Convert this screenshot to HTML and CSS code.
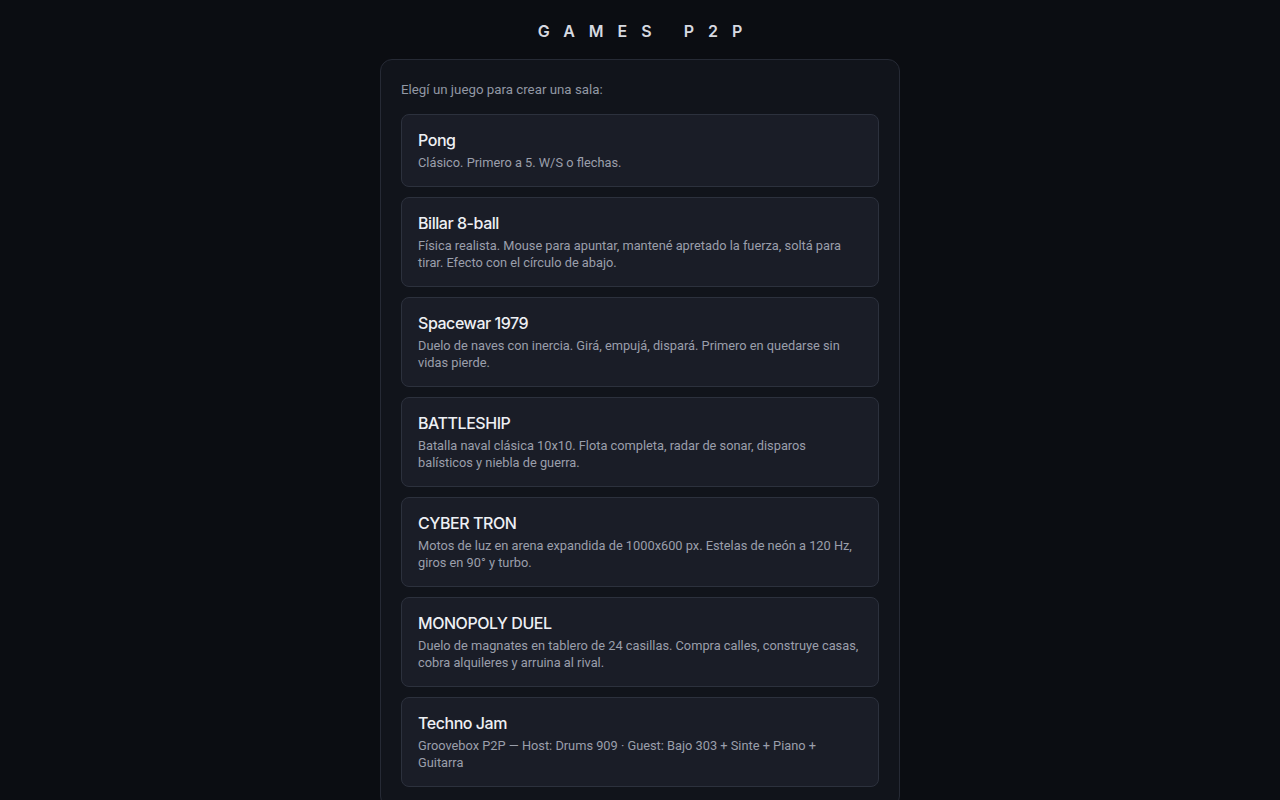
FILE: index.html
```html
<!DOCTYPE html>
<html lang="es">
<head>
    <meta charset="UTF-8">
    <meta name="viewport" content="width=device-width, initial-scale=1.0">
    <title>Games P2P</title>
    <link rel="stylesheet" href="styles.css">
</head>
<body>

<h1 class="brand">GAMES P2P</h1>

<div class="panel">
    <p class="hint">Elegí un juego para crear una sala:</p>

    <ul class="game-list">
        <li class="game">
            <div class="game-title">Pong</div>
            <div class="game-desc">Clásico. Primero a 5. W/S o flechas.</div>
        </li>
        <li class="game">
            <div class="game-title">Billar 8-ball</div>
            <div class="game-desc">Física realista. Mouse para apuntar, mantené apretado la fuerza, soltá para tirar. Efecto con el círculo de abajo.</div>
        </li>
        <li class="game">
            <div class="game-title">Spacewar 1979</div>
            <div class="game-desc">Duelo de naves con inercia. Girá, empujá, dispará. Primero en quedarse sin vidas pierde.</div>
        </li>
        <li class="game">
            <div class="game-title">BATTLESHIP</div>
            <div class="game-desc">Batalla naval clásica 10x10. Flota completa, radar de sonar, disparos balísticos y niebla de guerra.</div>
        </li>
        <li class="game">
            <div class="game-title">CYBER TRON</div>
            <div class="game-desc">Motos de luz en arena expandida de 1000x600 px. Estelas de neón a 120 Hz, giros en 90° y turbo.</div>
        </li>
        <li class="game">
            <div class="game-title">MONOPOLY DUEL</div>
            <div class="game-desc">Duelo de magnates en tablero de 24 casillas. Compra calles, construye casas, cobra alquileres y arruina al rival.</div>
        </li>
        <li class="game">
            <div class="game-title">Techno Jam</div>
            <div class="game-desc">Groovebox P2P — Host: Drums 909 · Guest: Bajo 303 + Sinte + Piano + Guitarra</div>
        </li>
    </ul>
</div>

</body>
</html>
```

FILE: styles.css
```css
body {
    font-family: 'Inter', 'Noto Sans', sans-serif;
    font-feature-settings: "calt" 0;
    background-color: #0b0d12;
    color: #e8eaef;
    margin: 0;
    padding: 0;
}

.brand {
    margin: 0;
    padding: 21px 0 18px;
    text-align: center;
    font-size: 16px;
    font-weight: 600;
    line-height: 20px;
    letter-spacing: 14px;
    text-indent: 14px;
    color: #d6d9e0;
}

.panel {
    width: 478px;
    margin: 0 auto;
    padding: 20px;
    background-color: #11141b;
    border: 1px solid #262a35;
    border-radius: 12px;
}

.hint {
    margin: 0 0 15px;
    padding-top: 1px;
    font-family: 'Roboto', sans-serif;
    font-size: 13.3px;
    line-height: 18px;
    color: #9298a4;
}

.game-list {
    list-style-type: none;
    margin: 0;
    padding: 0;
    display: flex;
    flex-direction: column;
    gap: 10px;
}

.game {
    padding: 16px 16px 15px;
    background-color: #1a1d27;
    border: 1px solid #2c313d;
    border-radius: 8px;
}

.game-title {
    font-size: 16px;
    font-weight: 500;
    line-height: 18px;
    letter-spacing: -0.45px;
    color: #eef0f4;
    margin-bottom: 5px;
}

.game-desc {
    font-family: 'Roboto', sans-serif;
    font-size: 12.8px;
    line-height: 17px;
    color: #9a9fab;
}
```
